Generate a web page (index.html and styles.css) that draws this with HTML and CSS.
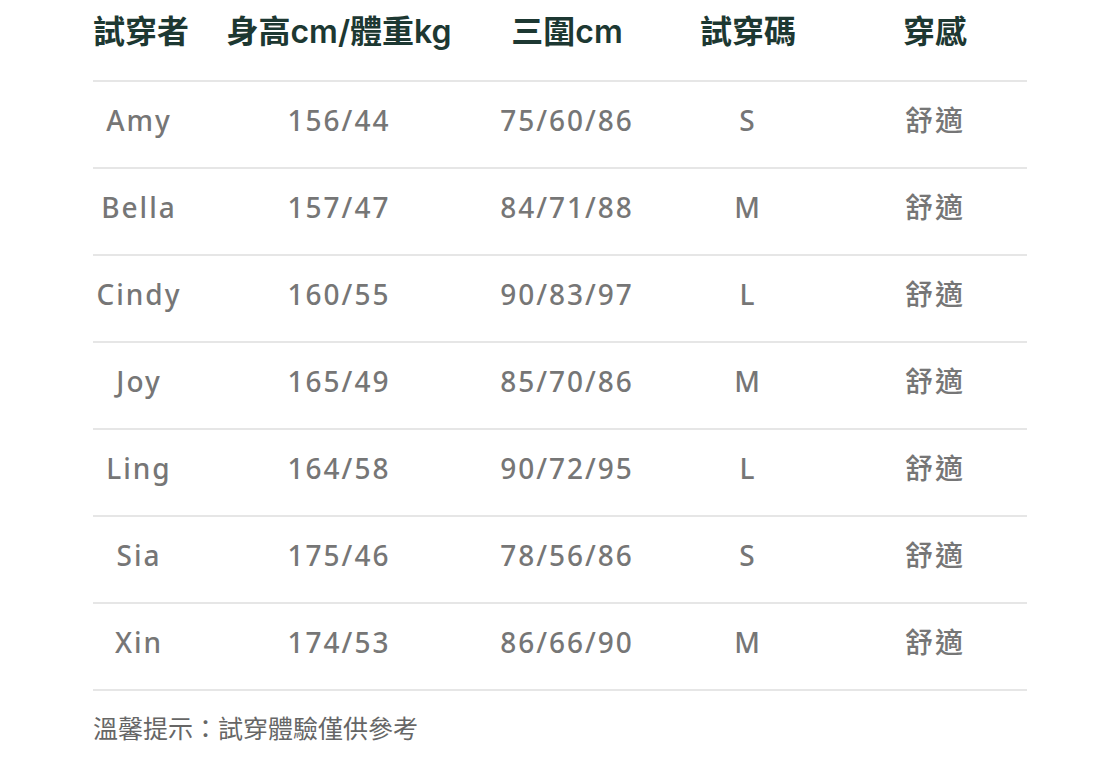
FILE: index.html
```html
<!DOCTYPE html>
<html lang="zh-Hant">
<head>
<meta charset="utf-8">
<link rel="stylesheet" href="styles.css">
</head>
<body>
<div class="sheet">
  <div class="row head">
    <div class="cell">試穿者</div>
    <div class="cell">身高cm/體重kg</div>
    <div class="cell">三圍cm</div>
    <div class="cell">試穿碼</div>
    <div class="cell">穿感</div>
  </div>
  <div class="row data"><div class="cell">Amy</div><div class="cell">156/44</div><div class="cell">75/60/86</div><div class="cell">S</div><div class="cell">舒適</div></div>
  <div class="row data"><div class="cell">Bella</div><div class="cell">157/47</div><div class="cell">84/71/88</div><div class="cell">M</div><div class="cell">舒適</div></div>
  <div class="row data"><div class="cell">Cindy</div><div class="cell">160/55</div><div class="cell">90/83/97</div><div class="cell">L</div><div class="cell">舒適</div></div>
  <div class="row data"><div class="cell">Joy</div><div class="cell">165/49</div><div class="cell">85/70/86</div><div class="cell">M</div><div class="cell">舒適</div></div>
  <div class="row data"><div class="cell">Ling</div><div class="cell">164/58</div><div class="cell">90/72/95</div><div class="cell">L</div><div class="cell">舒適</div></div>
  <div class="row data"><div class="cell">Sia</div><div class="cell">175/46</div><div class="cell">78/56/86</div><div class="cell">S</div><div class="cell">舒適</div></div>
  <div class="row data"><div class="cell">Xin</div><div class="cell">174/53</div><div class="cell">86/66/90</div><div class="cell">M</div><div class="cell">舒適</div></div>
  <p class="note">溫馨提示：試穿體驗僅供參考</p>
</div>
</body>
</html>
```

FILE: styles.css
```css
html, body {
  margin: 0;
  padding: 0;
  background: #ffffff;
}

.sheet {
  width: 934px;
  margin-left: 93px;
  font-family: "Noto Sans", "Noto Sans CJK TC", sans-serif;
}

.row {
  display: grid;
  grid-template-columns: 92px 308px 148px 214px 160px 12px;
  border-bottom: 2px solid #e6e6e6;
}

.cell {
  text-align: center;
  white-space: nowrap;
}

.head {
  height: 80px;
  align-items: start;
}

.head .cell {
  font-family: Inter, "Noto Sans CJK TC", sans-serif;
  font-weight: 600;
  font-size: 32px;
  line-height: 64px;
  color: #1d3832;
}

.data {
  height: 85px;
  align-items: center;
}

.data .cell {
  font-size: 28px;
  font-weight: 500;
  letter-spacing: 2px;
  line-height: 36px;
  color: #767676;
  padding-bottom: 10px;
}

.note {
  margin: 0;
  padding-top: 18px;
  font-family: "Noto Sans CJK TC", sans-serif;
  font-size: 25px;
  line-height: 36px;
  color: #666666;
}
```
